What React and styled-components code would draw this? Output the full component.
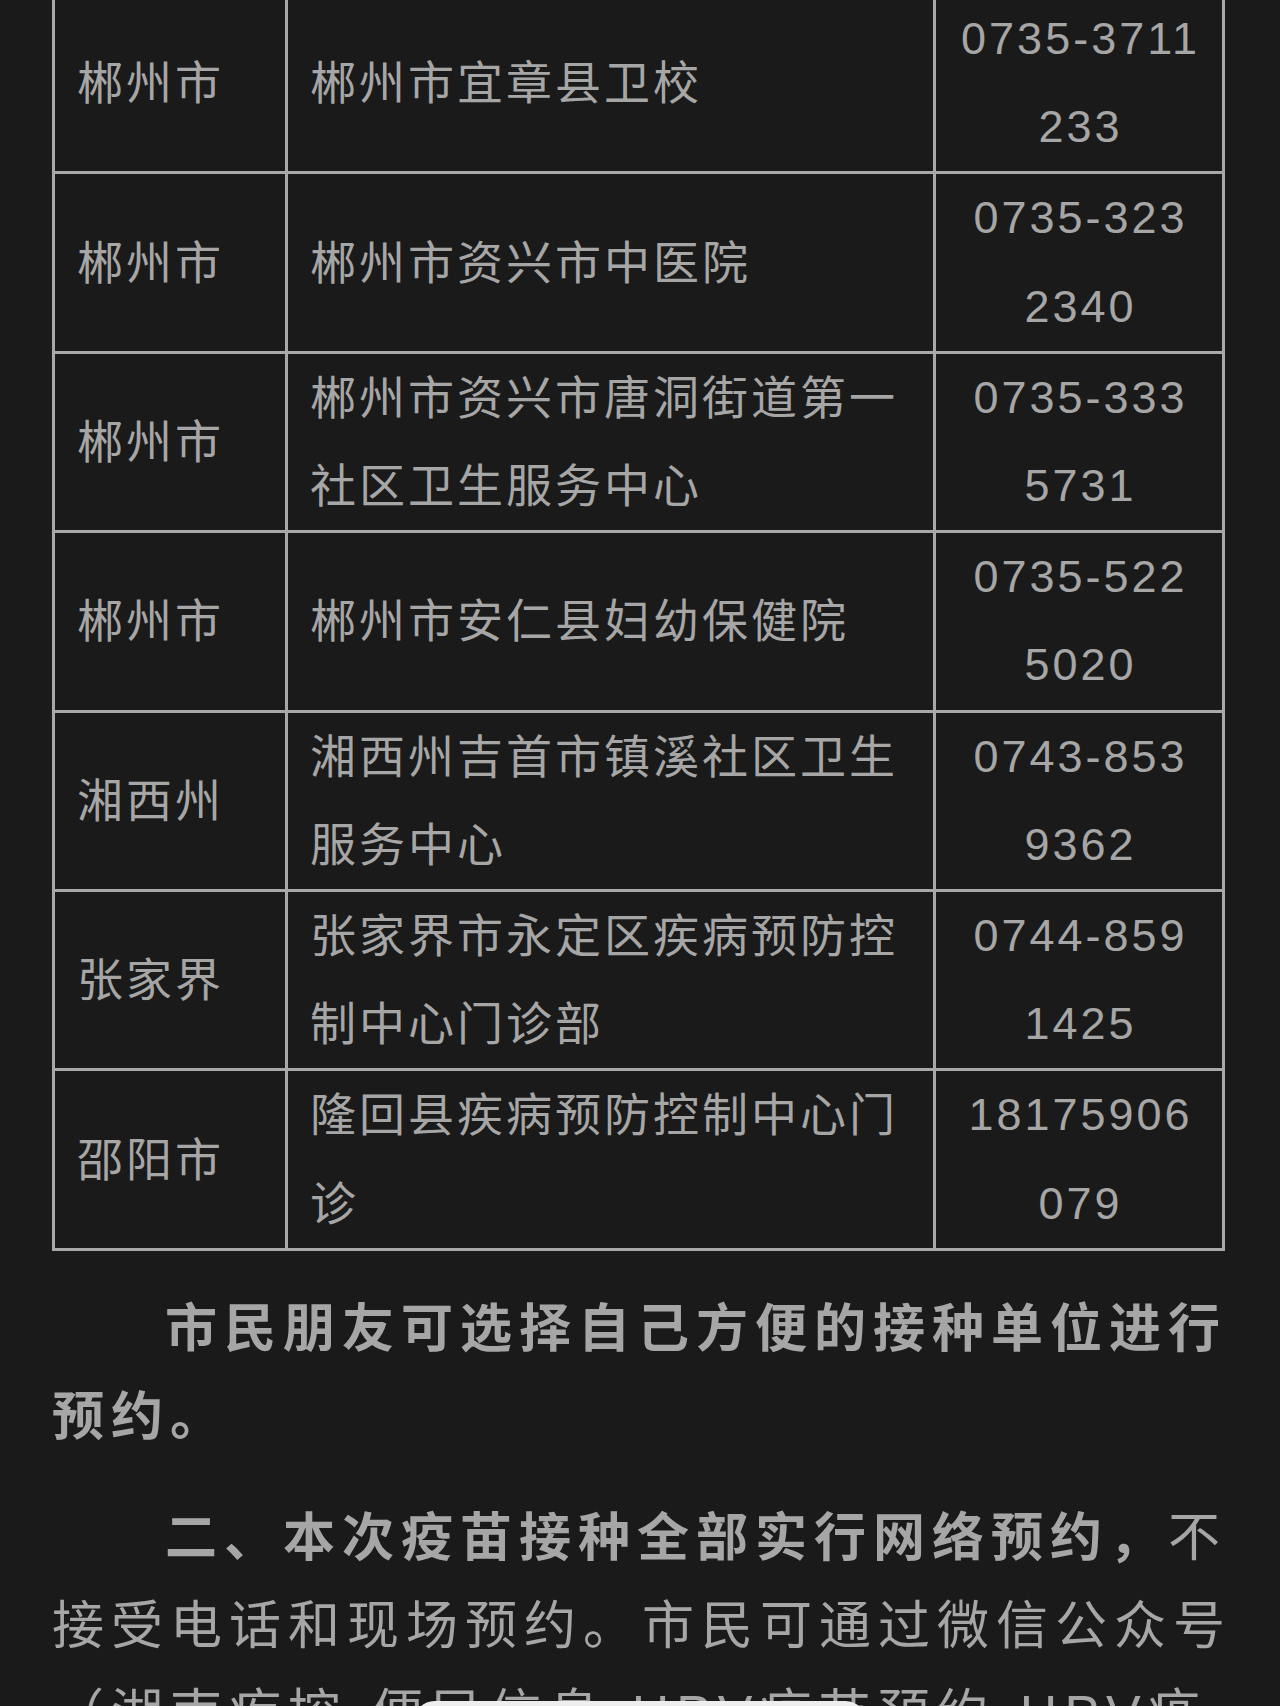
import React from 'react';
import styled, { createGlobalStyle } from 'styled-components';

// ========= Page base =========
const GlobalStyle = createGlobalStyle`
  html, body {
    margin: 0;
    padding: 0;
    background: #1a1a1a;
    overflow: hidden;
  }
`;

const rows = [
  { city: '郴州市', site: '郴州市宜章县卫校', phone: ['0735-3711', '233'] },
  { city: '郴州市', site: '郴州市资兴市中医院', phone: ['0735-323', '2340'] },
  { city: '郴州市', site: '郴州市资兴市唐洞街道第一社区卫生服务中心', phone: ['0735-333', '5731'] },
  { city: '郴州市', site: '郴州市安仁县妇幼保健院', phone: ['0735-522', '5020'] },
  { city: '湘西州', site: '湘西州吉首市镇溪社区卫生服务中心', phone: ['0743-853', '9362'] },
  { city: '张家界', site: '张家界市永定区疾病预防控制中心门诊部', phone: ['0744-859', '1425'] },
  { city: '邵阳市', site: '隆回县疾病预防控制中心门诊', phone: ['18175906', '079'] },
];

function App() {
  return (
    <>
      <GlobalStyle />
      <Page>
        <Table role="table">
          {rows.map((row, i) => (
            <Row role="row" key={i}>
              <Cell role="cell">{row.city}</Cell>
              <Cell role="cell">{row.site}</Cell>
              <Cell role="cell" $center>
                <span>
                  {row.phone.map((line) => (
                    <PhoneLine key={line}>{line}</PhoneLine>
                  ))}
                </span>
              </Cell>
            </Row>
          ))}
        </Table>

        <Paragraph>
          <strong>市民朋友可选择自己方便的接种单位进行预约。</strong>
        </Paragraph>

        <Paragraph>
          <strong>二、本次疫苗接种全部实行网络预约，</strong>
          不接受电话和现场预约。市民可通过微信公众号（湖南疾控-便民信息-HPV疫苗预约-HPV疫苗预约）进行预约。
        </Paragraph>
      </Page>
      <SheetEdge />
    </>
  );
}

const Page = styled.main`
  box-sizing: border-box;
  height: 1706px;
  padding-left: 52px;
  background: #1a1a1a;
  color: #a6a6a6;
  font-family: 'Liberation Sans', 'Noto Sans CJK SC', sans-serif;
  overflow: hidden;
`;

const Table = styled.div`
  box-sizing: border-box;
  width: 1173px;
  margin-top: -8px;
  border-top: 3px solid #a8a8a8;
  border-left: 3px solid #a8a8a8;
`;

const Row = styled.div`
  display: grid;
  grid-template-columns: 233px 648px 289px;
`;

const Cell = styled.div`
  box-sizing: border-box;
  min-height: 179.4px;
  display: flex;
  align-items: center;
  justify-content: ${(p) => (p.$center ? 'center' : 'flex-start')};
  padding: ${(p) => (p.$center ? '0 0 0 3px' : '0 10px 0 22px')};
  border-right: 3px solid #a8a8a8;
  border-bottom: 3px solid #a8a8a8;
  font-size: 46px;
  line-height: 88.2px;
  letter-spacing: 3px;
  text-align: ${(p) => (p.$center ? 'center' : 'left')};
`;

const PhoneLine = styled.span`
  display: block;
  font-size: 45px;
`;

const Paragraph = styled.p`
  width: 1180px;
  margin: 34px 0 0;
  font-size: 52px;
  line-height: 88px;
  letter-spacing: 7px;
  text-indent: 113px;

  & + & {
    margin-top: 33px;
  }

  strong {
    font-weight: 700;
  }
`;

// bottom sheet peeking in from under the screen edge
const SheetEdge = styled.div`
  position: fixed;
  left: 414px;
  bottom: -36px;
  width: 452px;
  height: 41px;
  border-radius: 22px;
  background: #eeeeee;
`;

export default App;
